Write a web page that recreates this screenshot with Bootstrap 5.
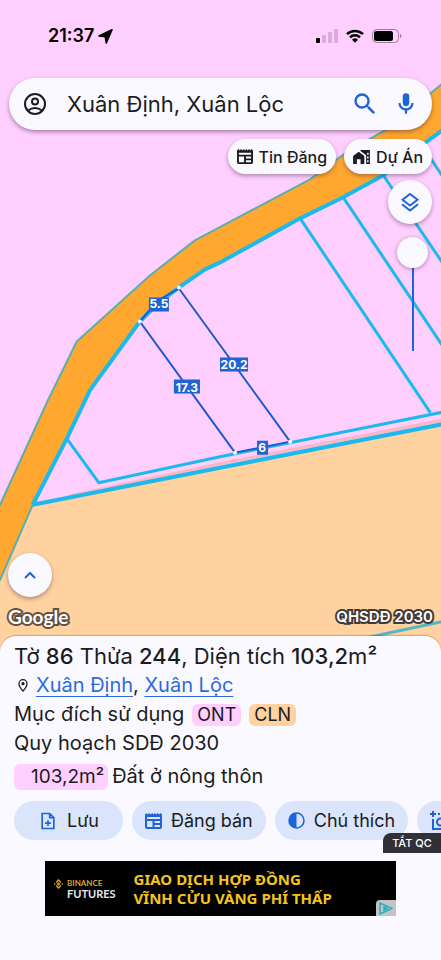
<!DOCTYPE html>
<html lang="vi">
<head>
<meta charset="utf-8">
<meta name="viewport" content="width=device-width, initial-scale=1">
<title>Xuân Định, Xuân Lộc</title>
<link href="https://cdn.jsdelivr.net/npm/bootstrap@5.3.0/dist/css/bootstrap.min.css" rel="stylesheet">
<style>
  :root { --surface: #faf9ff; --ink: #1b1c20; --accent: #1f63da; --chip: #dae4fb; --ont: #ffcfff; --cln: #ffd2a0; }
  body { font-family: Inter, "Noto Sans", sans-serif; color: var(--ink); background: var(--surface); }
  svg { display: block; flex: none; }
  .map-area { background: var(--ont); }
  .map-art { inset: 0; width: 100%; height: calc(100% + 16px); }
  .map-art text { font: 700 12px/1 Inter, sans-serif; fill: #fff; text-anchor: middle; }
  .status-bar { padding: 24px 38px 0 48px; height: 48px; color: #000; }
  .clock { font-size: 18px; font-weight: 600; line-height: 24px; }
  .search-bar { margin: 30px 9px 0; padding: 0 14px; height: 52px; background: var(--surface); box-shadow: 0 2px 4px rgba(60,30,60,.45); }
  .search-input { font-size: 22px; line-height: 32px; color: var(--ink); border: 0; outline: 0; background: transparent; min-width: 0; }
  .bare { border: 0; padding: 0; background: none; color: inherit; }
  .accent { color: var(--accent); }
  .float-btn { background: var(--surface); border: 0; box-shadow: 0 2px 4px rgba(60,30,60,.4); color: var(--ink); }
  .filter-btn { height: 35px; padding: 0 9px; font-size: 16px; font-weight: 500; gap: 6px; }
  .round-btn { width: 44px; height: 44px; color: var(--accent); }
  .filters { margin: 9px 9px 0; }
  .side-tools { margin: 6px 9px 0; }
  .opacity-range { appearance: none; writing-mode: vertical-lr; width: 32px; height: 114px; margin: 13px 3px 0; background: linear-gradient(var(--accent), var(--accent)) center / 2px 100% no-repeat; }
  .opacity-range::-webkit-slider-runnable-track { width: 32px; height: 114px; background: none; }
  .opacity-range::-webkit-slider-thumb { appearance: none; width: 31px; height: 31px; border-radius: 50%; background: var(--surface); box-shadow: 0 1px 4px rgba(60,30,60,.45); }
  .map-foot { padding: 0 8px 7px; }
  .outlined { color: #fff; paint-order: stroke fill; -webkit-text-stroke: 4px #413a37; line-height: 24px; }
  .google { font-size: 19px; font-weight: 700; font-family: Lato, sans-serif; -webkit-text-stroke-color: #65503d; }
  .layer-name { font-size: 15px; font-weight: 600; }
  .sheet { background: var(--surface); border-radius: 16px 16px 0 0; padding: 5px 0 44px; box-shadow: 0 -1px 1px rgba(100,60,20,.3); }
  .details { padding: 0 14px; font-size: 20px; line-height: 29px; }
  .parcel { font-size: 22px; line-height: 30px; font-weight: 400; }
  .parcel b { font-weight: 500; }
  .details a { color: #2b6be0; text-underline-offset: 4px; text-decoration-thickness: 1px; }
  .tag { font-size: 18px; line-height: 22px; padding: 0 5px; border-radius: 6px; color: var(--ink); }
  .tag-ont { background: var(--ont); }
  .tag-cln { background: var(--cln); }
  .tag-area { font-size: 19px; line-height: 26px; padding: 0 4px 0 17px; }
  .actions { padding: 10px 0 0 14px; overflow: hidden; gap: 9px; }
  .action-btn { height: 39px; border: 0; border-radius: 20px; background: var(--chip); color: var(--ink); font-size: 18px; flex: none; gap: 9px; padding: 0 13px; }
  .action-save { padding: 0 24px; }
  .ad-close { right: 0; top: -7px; height: 20px; width: 58px; border: 0; border-radius: 8px 0 0 0; background: #303036; color: #fff; font-size: 11px; line-height: 20px; font-weight: 500; }
  .ad-wrap { padding: 21px 45px 0; }
  .ad-box { height: 55px; background: #000; padding-left: 9px; color: #f5c51e; }
  .brand-top { font: 700 8px/10px Lato, sans-serif; color: #d8a72c; }
  .brand-sub { font: 700 11px/12px Lato, sans-serif; color: #e8e8e8; }
  .ad-copy { font: 700 15px/19px "Noto Sans", sans-serif; color: #f5c51e; margin-left: 18px; }
  .ad-mark { right: 0; bottom: 0; width: 20px; height: 16px; background: #c4c4c6; border-radius: 4px 0 0 0; }
</style>
</head>
<body>
<main class="d-flex flex-column min-vh-100">
  <section class="map-area position-relative flex-grow-1 d-flex flex-column" aria-label="Bản đồ">
    <svg class="map-art position-absolute" viewBox="0 0 441 651" preserveAspectRatio="xMidYMin slice" aria-hidden="true">
      <defs><filter id="soft" x="-5%" y="-5%" width="110%" height="110%"><feGaussianBlur stdDeviation=".7"/></filter></defs>
      <rect width="441" height="651" fill="#ffcfff"/>
      <g filter="url(#soft)" fill="none" stroke="#1fb9ed" stroke-linejoin="round">
        <path d="M33 504 220 467 450 421V660H-10V594L0 578Z" fill="#ffd2a0" stroke="none"/>
        <path d="M70 495 220 463 450 418" stroke="#ffb5c4" stroke-width="3"/>
        <path d="M450 77 385 130 345 153 310 179 240 216 195 240 150 275 77 341 48 400 0 505-10 530V604L0 580 33 504 67 438 90 390 97 380 140 321 158 303 179 287 205 269 220 262 300 218 343 197 383 175 415 150 450 124Z" fill="#ffa72e" stroke="none"/>
        <path d="M450 77 385 130 345 153 310 179 240 216 195 240 150 275 77 341 48 400 0 505" stroke="#5aafae" stroke-width="2"/>
        <path d="M33 504 0 580" stroke="#5aafae" stroke-width="2"/>
        <path d="M33 504 67 438 90 390 97 380 140 321 158 303 179 287 205 269 220 262 300 218 343 197 383 175 415 150 450 124" stroke-width="4"/>
        <path d="M33 504 220 467 450 422" stroke-width="4"/>
        <path d="M67 438 99 482 220 456 450 410M300 218 430 412M343 197 450 357M383 175 450 274M425 150 450 188" stroke-width="3"/>
        <path d="M360 638 450 619" stroke="#56b6c4" stroke-width="3"/>
      </g>
      <path d="M140 321 158 300 179 288 290 441 235 452Z" fill="none" stroke="#2158cd" stroke-width="2"/>
      <g fill="#fff"><circle cx="140" cy="321" r="2"/><circle cx="179" cy="287" r="2"/><circle cx="290" cy="441" r="2"/><circle cx="235" cy="452" r="2"/></g>
      <g fill="#1f63d4"><path d="M149 297h20v14h-20zM220 357h28v14h-28zM174 379h26v14h-26zM257 440h11v14h-11z"/></g>
      <text x="159" y="308">5.5</text><text x="234" y="368">20.2</text><text x="187" y="391">17.3</text><text x="262" y="451">6</text>
    </svg>

    <div class="status-bar position-relative d-flex align-items-center">
      <span class="clock">21:37</span>
      <svg class="ms-1" width="15" height="15" viewBox="0 0 15 15" aria-hidden="true"><path d="M14 .8 8.300 14 7.300 7.800 1 7Z" fill="#000" stroke="#000" stroke-width="1.600" stroke-linejoin="round"/></svg>
      <svg class="ms-auto" width="22" height="14" viewBox="0 0 22 14" aria-hidden="true"><rect y="9" width="4" height="5" rx="1"/><g fill="#dcabde"><rect x="6" y="6" width="4" height="8" rx="1"/><rect x="12" y="3" width="4" height="11" rx="1"/><rect x="18" width="4" height="14" rx="1"/></g></svg>
      <svg class="ms-2" width="18" height="14" viewBox="0 0 18 14" aria-hidden="true"><g fill="none" stroke="#000" stroke-width="2.500"><path d="M1 5.200a11.500 11.500 0 0 1 16 0M4 8.400a7 7 0 0 1 10 0"/></g><path d="M9 13.800 6 10.800a4.300 4.300 0 0 1 6 0Z"/></svg>
      <svg class="ms-2" width="31" height="14" viewBox="0 0 31 14" aria-hidden="true"><rect x=".5" y=".5" width="26" height="13" rx="4" fill="none" stroke="#9b7c9c"/><rect x="2" y="2" width="19" height="10" rx="2.500"/><path d="M28 5v4q1.500-.4 1.500-2T28 5" fill="#9b7c9c"/></svg>
    </div>

    <form class="search-bar position-relative rounded-pill d-flex align-items-center" role="search" onsubmit="return false">
      <button class="bare" type="button" aria-label="Tài khoản"><svg width="24" height="24" viewBox="0 0 24 24" fill="none" stroke="currentColor" stroke-width="2"><circle cx="12" cy="12" r="10"/><circle cx="12" cy="9.500" r="3"/><path d="M5 18.500q7-5 14 0"/></svg></button>
      <input class="search-input flex-grow-1 ms-3 ps-1" type="text" aria-label="Tìm kiếm địa điểm" value="Xuân Định, Xuân Lộc">
      <button class="bare accent" type="submit" aria-label="Tìm"><svg width="26" height="26" viewBox="1 1 22 22" fill="currentColor"><path d="M15.500 14h-.79l-.28-.27A6.470 6.470 0 0 0 16 9.500 6.500 6.500 0 1 0 9.500 16c1.610 0 3.090-.59 4.230-1.570l.27.28v.79l5 4.990L20.490 19zm-6 0a4.500 4.500 0 1 1 0-9 4.500 4.500 0 0 1 0 9"/></svg></button>
      <button class="bare accent ms-3" type="button" aria-label="Tìm bằng giọng nói"><svg width="24" height="26" viewBox="1 0 22 24" fill="currentColor"><path d="M12 14c1.660 0 3-1.340 3-3V5a3 3 0 0 0-6 0v6c0 1.660 1.340 3 3 3m5-3a5 5 0 0 1-10 0H5a7 7 0 0 0 6 6.920V21h2v-3.080A7 7 0 0 0 19 11z"/></svg></button>
    </form>

    <div class="filters position-relative d-flex justify-content-end gap-2">
      <button class="float-btn filter-btn rounded-pill d-flex align-items-center" type="button"><svg width="16" height="15" viewBox="0 0 17 16"><path d="M0 1.500 1.400 0l1.400 1.500L4.200 0l1.500 1.500L7.100 0l1.400 1.500L9.900 0l1.400 1.500L12.800 0l1.400 1.500L15.600 0 17 1.500V14q0 2-2 2H2q-2 0-2-2ZM2 8v6h5.500V8Zm7.500 0v2H15V8Zm0 4v2H15v-2ZM2 4v2h13V4Z" fill="currentColor" fill-rule="evenodd"/></svg><span>Tin Đăng</span></button>
      <button class="float-btn filter-btn rounded-pill d-flex align-items-center" type="button"><svg width="17" height="14" viewBox="0 0 18 15"><path d="M0 6.500 6 2l6 4.500V15H8v-5H4v5H0ZM8 0h10v15h-4V5.500L8 1.200ZM15 3v2h1.600V3Zm0 4v2h1.600V7Zm0 4v2h1.600v-2Z" fill="currentColor" fill-rule="evenodd"/></svg><span>Dự Án</span></button>
    </div>

    <div class="side-tools position-relative d-flex flex-column align-items-end">
      <button class="float-btn round-btn rounded-circle d-flex align-items-center justify-content-center" type="button" aria-label="Lớp bản đồ"><svg width="20" height="20" viewBox="0 0 20 20" fill="none" stroke="currentColor" stroke-width="2"><path d="m10 2 7.500 5.800L10 13.600 2.500 7.800ZM2 12.300l8 6.200 8-6.200"/></svg></button>
      <input class="opacity-range" type="range" min="0" max="100" value="0" aria-label="Độ mờ lớp bản đồ">
    </div>

    <div class="map-foot position-relative mt-auto">
      <button class="float-btn round-btn rounded-circle d-flex align-items-center justify-content-center mb-2" type="button" aria-label="Mở rộng"><svg width="12" height="8" viewBox="0 0 12 8" fill="none" stroke="currentColor" stroke-width="2"><path d="m1 7 5-5 5 5"/></svg></button>
      <div class="d-flex justify-content-between align-items-center"><span class="outlined google">Google</span><span class="outlined layer-name">QHSDĐ 2030</span></div>
    </div>
  </section>

  <section class="sheet position-relative">
    <div class="details">
      <h1 class="parcel mb-0">Tờ <b>86</b> Thửa <b>244</b>, Diện tích <b>103,2</b>m²</h1>
      <div class="d-flex align-items-center"><svg class="ms-1 me-2" width="10" height="13" viewBox="0 0 10 13" fill="none" stroke="currentColor" stroke-width="1.300"><path d="M5 12Q1 7.700 1 4.700a4 4 0 0 1 8 0Q9 7.700 5 12Z"/><circle cx="5" cy="4.700" r="1" fill="currentColor"/></svg><span><a href="#">Xuân Định</a>, <a href="#">Xuân Lộc</a></span></div>
      <div class="d-flex align-items-center gap-2"><span>Mục đích sử dụng</span><span class="tag tag-ont">ONT</span><span class="tag tag-cln">CLN</span></div>
      <div>Quy hoạch SDĐ 2030</div>
      <div class="d-flex align-items-center gap-1 pt-1"><span class="tag tag-ont tag-area">103,2m²</span><span>Đất ở nông thôn</span></div>
    </div>
    <div class="actions d-flex">
      <button class="action-btn action-save d-flex align-items-center" type="button"><svg width="20" height="20" viewBox="0 0 24 24" fill="none" stroke="#1f63da" stroke-width="2"><path d="M5 3h9l5 5v13H5ZM14 3v5h5M12 11v7M8.500 14.500h7"/></svg>Lưu</button>
      <button class="action-btn d-flex align-items-center" type="button"><svg width="17" height="16" viewBox="0 0 17 16"><path d="M0 1.500 1.400 0l1.400 1.500L4.200 0l1.500 1.500L7.100 0l1.400 1.500L9.900 0l1.400 1.500L12.800 0l1.400 1.500L15.600 0 17 1.500V14q0 2-2 2H2q-2 0-2-2ZM2 8v6h5.500V8Zm7.500 0v2H15V8Zm0 4v2H15v-2ZM2 4v2h13V4Z" fill="#1f63da" fill-rule="evenodd"/></svg>Đăng bán</button>
      <button class="action-btn d-flex align-items-center" type="button"><svg width="17" height="17" viewBox="0 0 17 17"><circle cx="8.500" cy="8.500" r="7.500" fill="none" stroke="#1f63da" stroke-width="1.500"/><path d="M8.500 1a7.500 7.500 0 0 0 0 15Z" fill="#1f63da"/></svg>Chú thích</button>
      <button class="action-btn d-flex align-items-center pe-5" type="button" aria-label="Chụp ảnh"><svg width="20" height="20" viewBox="0 0 20 20" fill="none" stroke="#1f63da" stroke-width="2"><path d="M3 0v6M0 3h6M8 3h2M12 3h2M3 8v10h15V3"/><circle cx="10.500" cy="11" r="3.500"/></svg></button>
    </div>
    <div class="position-relative">
      <button class="ad-close position-absolute p-0" type="button">TẮT QC</button>
      <div class="ad-wrap">
        <div class="ad-box position-relative d-flex align-items-center">
          <svg class="align-self-start mt-3 me-1" width="9" height="14" viewBox="0 0 9 14" fill="none" stroke="#d8a72c" stroke-width="1.300"><path d="M2 5.500 4.500 3 7 5.500M2 8.500 4.500 11 7 8.500M4.500 6l1 1-1 1-1-1ZM.7 6.300v1.400M8.300 6.300v1.400"/></svg>
          <div><div class="brand-top">BINANCE</div><div class="brand-sub">FUTURES</div></div>
          <div class="ad-copy">GIAO DỊCH HỢP ĐỒNG<br>VĨNH CỬU VÀNG PHÍ THẤP</div>
          <button class="ad-mark bare position-absolute d-flex align-items-center justify-content-center" type="button" aria-label="Thông tin quảng cáo"><svg width="14" height="13" viewBox="0 0 14 13" fill="none" stroke="#20b0bd" stroke-width="1.500"><path d="M1 1v11l12-5.500Z"/><path d="m5 5 3 1.500L5 8Z"/></svg></button>
        </div>
      </div>
    </div>
  </section>
</main>
<script src="https://cdn.jsdelivr.net/npm/bootstrap@5.3.0/dist/js/bootstrap.bundle.min.js"></script>
</body>
</html>
